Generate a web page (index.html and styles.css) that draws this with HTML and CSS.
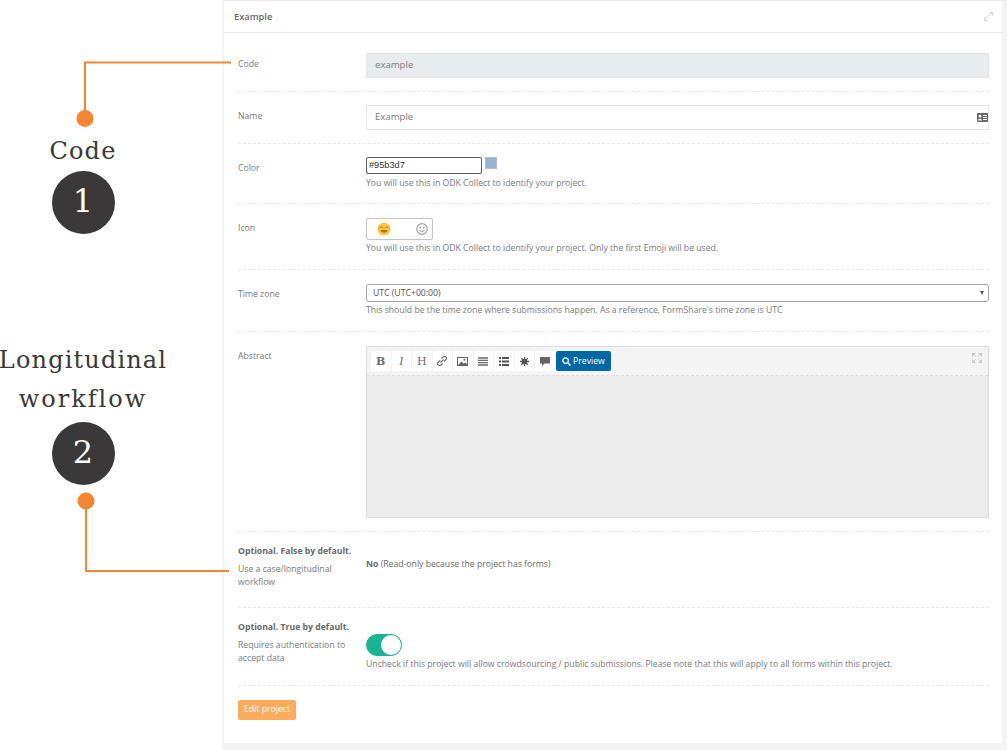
FILE: index.html
```html
<!DOCTYPE html>
<html lang="en">
<head>
  <meta charset="UTF-8" />
  <title>Edit project</title>
  <link rel="stylesheet" href="styles.css">
</head>
<body>
  <div class="page">
    <aside class="notes">
      <svg class="note-lines" width="222" height="750" viewBox="0 0 222 750">
        <path d="M85 118V62.500H231" fill="none" stroke="#f58634" stroke-width="2" />
        <circle cx="85" cy="118.500" r="8.500" fill="#f58634" />
        <path d="M86 501V571H229" fill="none" stroke="#f58634" stroke-width="2" />
        <circle cx="86" cy="501" r="8.500" fill="#f58634" />
      </svg>
      <div class="note note-code">
        <div class="note-title">Code</div>
        <div class="note-num">1</div>
      </div>
      <div class="note note-long">
        <div class="note-title">Longitudinal<br><span class="wide">workflow</span></div>
        <div class="note-num">2</div>
      </div>
    </aside>

    <main class="panel">
      <header class="panel-head">
        <h5>Example</h5>
        <svg class="expand" width="9" height="9" viewBox="0 0 9 9">
          <path d="M5.500 0H9V3.500ZM0 5.500V9H3.500ZM6 2L2 6" fill="#d3d8db" stroke="#d3d8db" />
        </svg>
      </header>

      <form class="panel-body">
        <div class="row row-code">
          <label>Code</label>
          <div class="field"><input class="control" type="text" value="example" disabled /></div>
        </div>

        <div class="row row-name">
          <label>Name</label>
          <div class="field has-icon">
            <input class="control" type="text" value="Example" />
            <svg class="card-icon" width="11" height="9" viewBox="0 0 11 9">
              <rect width="11" height="9" rx="1" fill="#666" />
              <circle cx="3" cy="3.200" r="1.400" fill="#fff" />
              <path d="M1 7.500C1 5 5 5 5 7.500Z" fill="#fff" />
              <path d="M6 2.500H10M6 4.500H10M6 6.500H10" stroke="#fff" />
            </svg>
          </div>
        </div>

        <div class="row row-color">
          <label>Color</label>
          <div class="field">
            <div class="color-line">
              <input class="color-text" type="text" value="#95b3d7" />
              <span class="color-swatch"></span>
            </div>
            <p class="help">You will use this in ODK Collect to identify your project.</p>
          </div>
        </div>

        <div class="row row-icon">
          <label>Icon</label>
          <div class="field">
            <div class="emoji-box">
              <svg width="14" height="14" viewBox="0 0 14 14">
                <circle cx="7" cy="7" r="6.500" fill="#fcc440" />
                <path d="M2.800 5.800Q4.200 3.800 5.600 5.800M8.400 5.800Q9.800 3.800 11.200 5.800" fill="none" stroke="#a8701c" />
                <path d="M3.500 8C4.500 11.500 9.500 11.500 10.500 8Z" fill="#a8701c" />
              </svg>
              <svg width="12" height="12" viewBox="0 0 12 12">
                <circle cx="6" cy="6" r="5.300" fill="#f4f4f4" stroke="#a8a8a8" stroke-width="1.200" />
                <circle cx="4.200" cy="4.600" r=".9" fill="#a0a0a0" />
                <circle cx="7.800" cy="4.600" r=".9" fill="#a0a0a0" />
                <path d="M3.500 7.500Q6 9.800 8.500 7.500" fill="none" stroke="#a0a0a0" />
              </svg>
            </div>
            <p class="help">You will use this in ODK Collect to identify your project. Only the first Emoji will be used.</p>
          </div>
        </div>

        <div class="row row-zone">
          <label>Time zone</label>
          <div class="field">
            <div class="select-box">
              <span>UTC (UTC+00:00)</span>
              <i class="caret"></i>
            </div>
            <p class="help">This should be the time zone where submissions happen. As a reference, FormShare's time zone is UTC</p>
          </div>
        </div>

        <div class="row row-abstract">
          <label>Abstract</label>
          <div class="field">
            <div class="editor">
              <div class="toolbar">
                <span class="tool tool-serif">B</span>
                <span class="tool tool-serif tool-i">I</span>
                <span class="tool tool-serif tool-h">H</span>
                <span class="tool">
                  <svg width="10" height="10" viewBox="0 0 10 10"><path d="M4.500 2.500L6 1Q7.500 0 9 1.200T8.500 4L7 5.500M5.500 7.500L4 9Q2.500 10 1 8.800T1.500 6L3 4.500M3.500 6.500L6.500 3.500" fill="none" stroke="#6a6a6a" stroke-width="1.100" /></svg>
                </span>
                <span class="tool">
                  <svg width="11" height="9" viewBox="0 0 11 9"><rect x=".5" y=".5" width="10" height="8" fill="#fff" stroke="#666" /><path d="M1 8L4.500 4.500L6.500 6.500L8 5.500L10 7V8.500H1Z" fill="#666" /><circle cx="7.500" cy="2.800" r="1" fill="#666" /></svg>
                </span>
                <span class="tool">
                  <svg width="10" height="9" viewBox="0 0 10 9"><path d="M0 1H10M0 3.300H10M0 5.600H10M0 8H10" stroke="#6a6a6a" stroke-width="1.300" /></svg>
                </span>
                <span class="tool">
                  <svg width="10" height="9" viewBox="0 0 10 9"><path d="M0 1H2M3 1H10M0 4.500H2M3 4.500H10M0 8H2M3 8H10" stroke="#555" stroke-width="2" /></svg>
                </span>
                <span class="tool">
                  <svg width="9" height="9" viewBox="0 0 9 9"><path d="M4.500 0V9M0 4.500H9M1.300 1.300L7.700 7.700M7.700 1.300L1.300 7.700" stroke="#555" stroke-width="1.300" /><circle cx="4.500" cy="4.500" r="2.800" fill="#555" /></svg>
                </span>
                <span class="tool">
                  <svg width="10" height="9" viewBox="0 0 10 9"><path d="M0 0H10V6.500H4.500L2 9V6.500H0Z" fill="#666" /></svg>
                </span>
                <span class="preview">
                  <svg width="9" height="9" viewBox="0 0 9 9"><circle cx="3.600" cy="3.600" r="2.800" fill="none" stroke="#fff" stroke-width="1.300" /><path d="M5.800 5.800L8.500 8.500" stroke="#fff" stroke-width="1.500" /></svg>
                  Preview
                </span>
                <svg class="full" width="10" height="10" viewBox="0 0 10 10">
                  <path d="M0 0H3.500L0 3.500ZM10 0V3.500L6.500 0ZM0 10V6.500L3.500 10ZM10 10H6.500L10 6.500ZM1 1L4 4M9 1L6 4M1 9L4 6M9 9L6 6" fill="#c6c6c6" stroke="#c6c6c6" stroke-width=".8" />
                </svg>
              </div>
              <div class="editor-area"></div>
            </div>
          </div>
        </div>

        <div class="row row-long">
          <label>
            <strong>Optional. False by default.</strong>
            Use a case/longitudinal workflow
          </label>
          <div class="field">
            <p class="plain"><b>No</b> (Read-only because the project has forms)</p>
          </div>
        </div>

        <div class="row row-auth">
          <label>
            <strong>Optional. True by default.</strong>
            Requires authentication to accept data
          </label>
          <div class="field">
            <div class="switch"><span class="knob"></span></div>
            <p class="help">Uncheck if this project will allow crowdsourcing / public submissions. Please note that this will apply to all forms within this project.</p>
          </div>
        </div>

        <div class="actions">
          <button type="button" class="btn-edit">Edit project</button>
        </div>
      </form>
    </main>
  </div>
</body>
</html>
```

FILE: styles.css
```css
html, body {
  margin: 0;
  padding: 0;
  height: 750px;
  overflow: hidden;
  background: #fff;
}
body {
  font-family: "Open Sans", Arial, sans-serif;
  font-size: 8.680px;
  color: #676a6c;
}
.page {
  position: relative;
  display: flex;
  height: 750px;
}

/* left hand notes */
.notes {
  width: 222px;
  flex: none;
}
.note-lines {
  position: absolute;
  left: 0;
  top: 0;
  z-index: 2;
  overflow: visible;
}
.note {
  position: absolute;
  text-align: center;
  color: #3a3838;
  font-family: "DejaVu Serif", "Liberation Serif", serif;
}
.note-code {
  left: 33px;
  top: 136px;
  width: 100px;
}
.note-long {
  left: -17px;
  top: 341px;
  width: 200px;
}
.note-title {
  font-size: 24px;
  line-height: 39px;
  letter-spacing: 1.150px;
}
.note-title .wide {
  letter-spacing: 2px;
}
.note-code .note-title {
  line-height: 30px;
}
.note-num {
  width: 63px;
  height: 63px;
  margin: 5px auto 0;
  border-radius: 50%;
  background: #3a3838;
  color: #fff;
  font-size: 32px;
  line-height: 61px;
}
.note-long .note-num {
  margin-top: 3px;
}

/* panel */
.panel {
  flex: 1;
  border-left: 2px solid #f3f3f4;
  border-right: 5px solid #f3f3f4;
  border-bottom: 7px solid #f3f3f4;
  border-top: 1px solid #e7eaec;
  background: #fff;
  height: 742px;
}
.panel-head {
  display: flex;
  justify-content: space-between;
  align-items: center;
  height: 31px;
  padding: 0 9px 0 10px;
  border-bottom: 1px solid #e7eaec;
}
h5 {
  margin: 0;
  font-size: 9.300px;
  font-weight: 600;
}
.panel-body {
  padding: 20px 13px 0 14px;
}
.row {
  display: flex;
  padding-bottom: 13px;
  margin-bottom: 13px;
  border-bottom: 1px dashed #e7eaec;
}
.row > label {
  width: 128px;
  flex: none;
  line-height: 13px;
  padding-top: 5px;
  color: #787b7d;
}
.field {
  flex: 1;
  position: relative;
  min-width: 0;
}
.row strong {
  display: block;
  margin-bottom: 5px;
  font-weight: 700;
  color: #676a6c;
}
.control {
  display: block;
  box-sizing: border-box;
  width: 100%;
  height: 25px;
  padding: 0 8px 2px;
  border: 1px solid #e5e6e7;
  background: #fff;
  font: 9.600px "Open Sans", Arial, sans-serif;
  color: #787b7d;
}
.control:disabled {
  background: #e9ecef;
}
.card-icon {
  position: absolute;
  right: 1px;
  top: 8px;
}
.help {
  margin: 0;
  line-height: 13px;
  color: #787b7d;
}
.plain {
  margin: 13px 0 0;
  line-height: 13px;
}
.plain b {
  font-weight: 700;
}

/* color */
.row-icon,
.row-zone {
  padding-bottom: 14px;
}
.color-line {
  display: flex;
  align-items: flex-start;
  gap: 3px;
  height: 20px;
}
.color-text {
  box-sizing: border-box;
  width: 116px;
  height: 17px;
  padding: 0 2px 1px;
  border: 1px solid #5f5f5f;
  border-radius: 2px;
  font: 9.200px "Liberation Sans", Arial, sans-serif;
  color: #333;
}
.color-swatch {
  box-sizing: border-box;
  width: 12px;
  height: 12px;
  background: #95b3d7;
  border: 1px solid #b9bcc0;
}

/* icon */
.row-icon .field {
  padding-top: 1px;
}
.emoji-box {
  box-sizing: border-box;
  display: flex;
  justify-content: space-between;
  align-items: center;
  width: 67px;
  height: 22px;
  padding: 0 4px 0 10px;
  margin-bottom: 2px;
  border: 1px solid #c4c4c4;
  border-radius: 2px;
}

/* time zone */
.row-zone .field,
.row-abstract .field {
  padding-top: 1px;
}
.select-box {
  box-sizing: border-box;
  display: flex;
  justify-content: space-between;
  align-items: center;
  height: 18px;
  padding: 0 4px 0 6px;
  margin-bottom: 2px;
  border: 1px solid #a4a4a4;
  border-radius: 3px;
  color: #555;
}
.caret {
  width: 0;
  height: 0;
  border-left: 2.500px solid transparent;
  border-right: 2.500px solid transparent;
  border-top: 4px solid #555;
}

/* abstract */
.editor {
  box-sizing: border-box;
  height: 172px;
  border: 1px solid #ddd;
  display: flex;
  flex-direction: column;
}
.toolbar {
  position: relative;
  display: flex;
  align-items: center;
  gap: 1px;
  height: 28px;
  padding-left: 4px;
  background: #f4f4f4;
  border-bottom: 1px dashed #ddd;
  flex: none;
}
.tool {
  display: flex;
  align-items: center;
  justify-content: center;
  width: 19.500px;
  height: 20px;
  background: #fff;
  color: #6c6c6c;
  border-radius: 1px;
}
.tool-serif {
  font: 700 11px "DejaVu Serif", "Liberation Serif", serif;
}
.tool-i {
  font-style: italic;
  font-weight: 400;
  font-family: "Liberation Serif", serif;
  font-size: 12px;
}
.tool-h {
  font-weight: 400;
}
.preview {
  display: flex;
  align-items: center;
  gap: 2px;
  height: 20px;
  padding: 0 6.500px;
  border-radius: 2px;
  background: #0068a5;
  color: #fff;
}
.full {
  position: absolute;
  right: 6px;
  top: 6px;
}
.editor-area {
  flex: 1;
  background: #ececec;
}

/* optional rows */
.row-long > label,
.row-auth > label {
  padding-top: 0;
}
.row-long {
  padding-bottom: 18px;
}
.row-auth {
  padding-bottom: 14px;
}
.row-auth .field {
  padding-top: 13px;
}

/* switch */
.switch {
  box-sizing: border-box;
  position: relative;
  width: 36px;
  height: 22px;
  border-radius: 11px;
  border: 1px solid #1ab394;
  background: #1ab394;
  margin-bottom: 2px;
}
.knob {
  position: absolute;
  right: 0;
  top: 0;
  width: 20px;
  height: 20px;
  border-radius: 50%;
  background: #fff;
}

.actions {
  padding-top: 1px;
}
.btn-edit {
  display: block;
  width: 58px;
  height: 20px;
  padding: 0 0 2px;
  border: none;
  border-radius: 2px;
  background: #fbad5b;
  color: #fff;
  font: 8.680px "Open Sans", Arial, sans-serif;
}
```
